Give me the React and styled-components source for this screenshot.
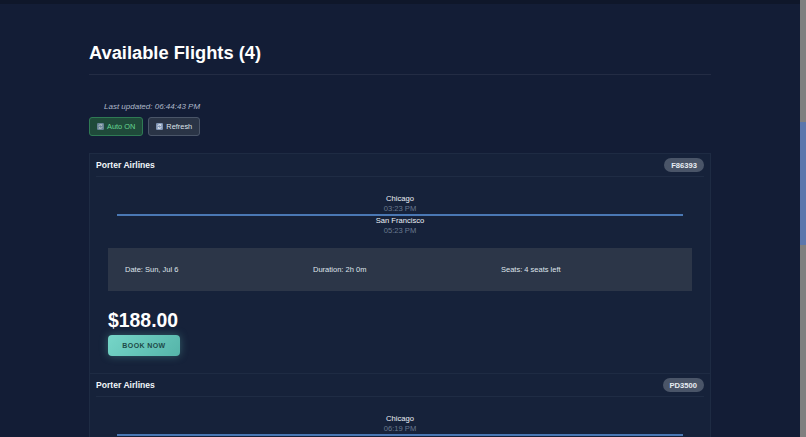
import React, { useLayoutEffect, useRef, useState } from "react";
import styled, { createGlobalStyle } from "styled-components";

const Global = createGlobalStyle`
  html, body { margin: 0; padding: 0; height: 100%; overflow: hidden; background: #131d36; }
  #root { height: 100%; }
  * { box-sizing: border-box; }
`;

const Scroller = styled.div`
  height: 100vh;
  overflow-y: scroll;
  padding-right: 6px;
  scrollbar-width: none;
  background: #131d36;
  font-family: "Liberation Sans", Arial, sans-serif;
  color: #e2e8f0;
  &::-webkit-scrollbar { display: none; }
`;

const Rail = styled.div`
  position: fixed;
  top: 0;
  right: 0;
  width: 6px;
  height: 100vh;
  background: #7f7f7f;
`;

const Thumb = styled.div`
  position: absolute;
  left: 0;
  width: 6px;
  background: #5b76ac;
`;

const SearchPanel = styled.section`
  height: 437px;
  background: #0f172a;
`;

const Results = styled.section`
  width: 622px;
  margin: 0 auto;
  padding: 36px 0 87px;
`;

const Heading = styled.h2`
  margin: 0;
  font-size: 18.3px;
  line-height: 26px;
  font-weight: 700;
  color: #ffffff;
  padding-bottom: 8px;
  border-bottom: 1px solid rgba(255, 255, 255, 0.07);
`;

const Toolbar = styled.div`
  margin-top: 26px;
  display: flex;
  flex-direction: column;
  gap: 5px;
`;

const Updated = styled.div`
  padding-left: 15px;
  font-size: 8px;
  line-height: 11px;
  font-style: italic;
  color: #aeb9ca;
`;

const ButtonRow = styled.div`
  display: flex;
  gap: 5px;
`;

const ToolButton = styled.button`
  height: 19px;
  padding: 0 7px;
  display: inline-flex;
  align-items: center;
  gap: 3px;
  font-family: inherit;
  font-size: 7.4px;
  border-radius: 3px;
  border: 1px solid ${(p) => (p.$active ? "#2f7a54" : "#4a5568")};
  background: ${(p) => (p.$active ? "#1f4a3a" : "#2a3446")};
  color: ${(p) => (p.$active ? "#66d692" : "#dde2ea")};
`;

const CardList = styled.div`
  margin-top: 17px;
  display: flex;
  flex-direction: column;
`;

const Card = styled.article`
  background: #16223a;
  border: 1px solid #1e2b43;
  & + & { border-top: none; }
  padding: 0 6px;
`;

const CardHeader = styled.header`
  display: flex;
  align-items: center;
  justify-content: space-between;
  padding: 4px 0;
  border-bottom: 1px solid #1f2c44;
`;

const Airline = styled.span`
  font-size: 8.6px;
  font-weight: 700;
  color: #f1f5f9;
`;

const Badge = styled.span`
  height: 14px;
  padding: 0 7px;
  border-radius: 7px;
  background: #4a5568;
  color: #e8edf3;
  font-size: 7.6px;
  font-weight: 700;
  display: inline-flex;
  align-items: center;
`;

const CardBody = styled.div`
  padding: 17px 12px 17px;
`;

const Route = styled.div`
  display: flex;
  flex-direction: column;
  align-items: center;
  text-align: center;
`;

const City = styled.div`
  font-size: 7.6px;
  line-height: 10px;
  color: #edf1f6;
`;

const Time = styled.div`
  font-size: 7.6px;
  line-height: 10px;
  color: #6b7a90;
`;

const RouteLine = styled.div`
  align-self: stretch;
  margin: 0 9px;
  height: 2px;
  background: #4a78b4;
`;

const Details = styled.div`
  margin-top: 12px;
  height: 43px;
  padding: 0 17px;
  background: #2c3648;
  display: grid;
  grid-template-columns: repeat(3, 176px);
  gap: 12px;
  align-items: center;
`;

const Detail = styled.span`
  font-size: 7.5px;
  color: #dfe4eb;
`;

const Price = styled.div`
  margin-top: 18px;
  font-size: 19.4px;
  line-height: 22px;
  font-weight: 700;
  color: #ffffff;
`;

const BookButton = styled.button`
  margin-top: 4px;
  width: 72px;
  height: 21px;
  border: none;
  border-radius: 4px;
  background: linear-gradient(135deg, #76d6c8, #55b4a9);
  color: #1e4a48;
  font-family: inherit;
  font-size: 7px;
  font-weight: 700;
  letter-spacing: 0.4px;
  box-shadow: 0 0 8px rgba(110, 210, 195, 0.35);
`;

const RefreshIcon = ({ dim }) => (
  <svg width="7" height="7" viewBox="0 0 14 14" style={{ opacity: dim ? 0.75 : 1 }}>
    <rect x="0" y="0" width="14" height="14" rx="2.5" fill="#8196b6" />
    <path d="M3.5 6.5a3.5 3.5 0 0 1 6-2.3M10.5 7.5a3.5 3.5 0 0 1-6 2.3" stroke="#fff" strokeWidth="1.5" fill="none" />
    <path d="M9.8 2.2v2.5H7.3M4.2 11.8V9.3h2.5" stroke="#fff" strokeWidth="1.3" fill="none" />
  </svg>
);

const flights = [
  { id: "F86393", airline: "Porter Airlines", from: "Chicago", dep: "03:23 PM", to: "San Francisco", arr: "05:23 PM", date: "Sun, Jul 6", dur: "2h 0m", seats: "4 seats left", price: "$188.00" },
  { id: "PD3500", airline: "Porter Airlines", from: "Chicago", dep: "06:19 PM", to: "San Francisco", arr: "08:19 PM", date: "Sun, Jul 6", dur: "2h 0m", seats: "7 seats left", price: "$214.00" },
  { id: "AC2741", airline: "Air Canada", from: "Chicago", dep: "08:05 PM", to: "San Francisco", arr: "10:05 PM", date: "Sun, Jul 6", dur: "2h 0m", seats: "2 seats left", price: "$239.00" },
  { id: "UA1188", airline: "United Airlines", from: "Chicago", dep: "09:40 PM", to: "San Francisco", arr: "11:40 PM", date: "Sun, Jul 6", dur: "2h 0m", seats: "9 seats left", price: "$256.00" },
];

export default function App() {
  const ref = useRef(null);
  const [thumb, setThumb] = useState({ top: 122, height: 123 });
  useLayoutEffect(() => {
    const el = ref.current;
    if (!el) return;
    el.scrollTop = 433;
    const ch = el.clientHeight;
    const sh = el.scrollHeight;
    const h = Math.max(20, (ch * ch) / sh);
    const top = sh > ch ? (el.scrollTop / (sh - ch)) * (ch - h) : 0;
    setThumb({ top, height: h });
  }, []);
  return (
    <>
      <Global />
      <Scroller ref={ref}>
        <SearchPanel />
        <Results>
          <Heading>Available Flights (4)</Heading>
          <Toolbar>
            <Updated>Last updated: 06:44:43 PM</Updated>
            <ButtonRow>
              <ToolButton $active>
                <RefreshIcon dim /> Auto ON
              </ToolButton>
              <ToolButton>
                <RefreshIcon /> Refresh
              </ToolButton>
            </ButtonRow>
          </Toolbar>
          <CardList>
            {flights.map((f) => (
              <Card key={f.id}>
                <CardHeader>
                  <Airline>{f.airline}</Airline>
                  <Badge>{f.id}</Badge>
                </CardHeader>
                <CardBody>
                  <Route>
                    <City>{f.from}</City>
                    <Time>{f.dep}</Time>
                    <RouteLine />
                    <City>{f.to}</City>
                    <Time>{f.arr}</Time>
                  </Route>
                  <Details>
                    <Detail>Date: {f.date}</Detail>
                    <Detail>Duration: {f.dur}</Detail>
                    <Detail>Seats: {f.seats}</Detail>
                  </Details>
                  <Price>{f.price}</Price>
                  <BookButton>BOOK NOW</BookButton>
                </CardBody>
              </Card>
            ))}
          </CardList>
        </Results>
      </Scroller>
      <Rail>
        <Thumb style={{ top: thumb.top, height: thumb.height }} />
      </Rail>
    </>
  );
}
